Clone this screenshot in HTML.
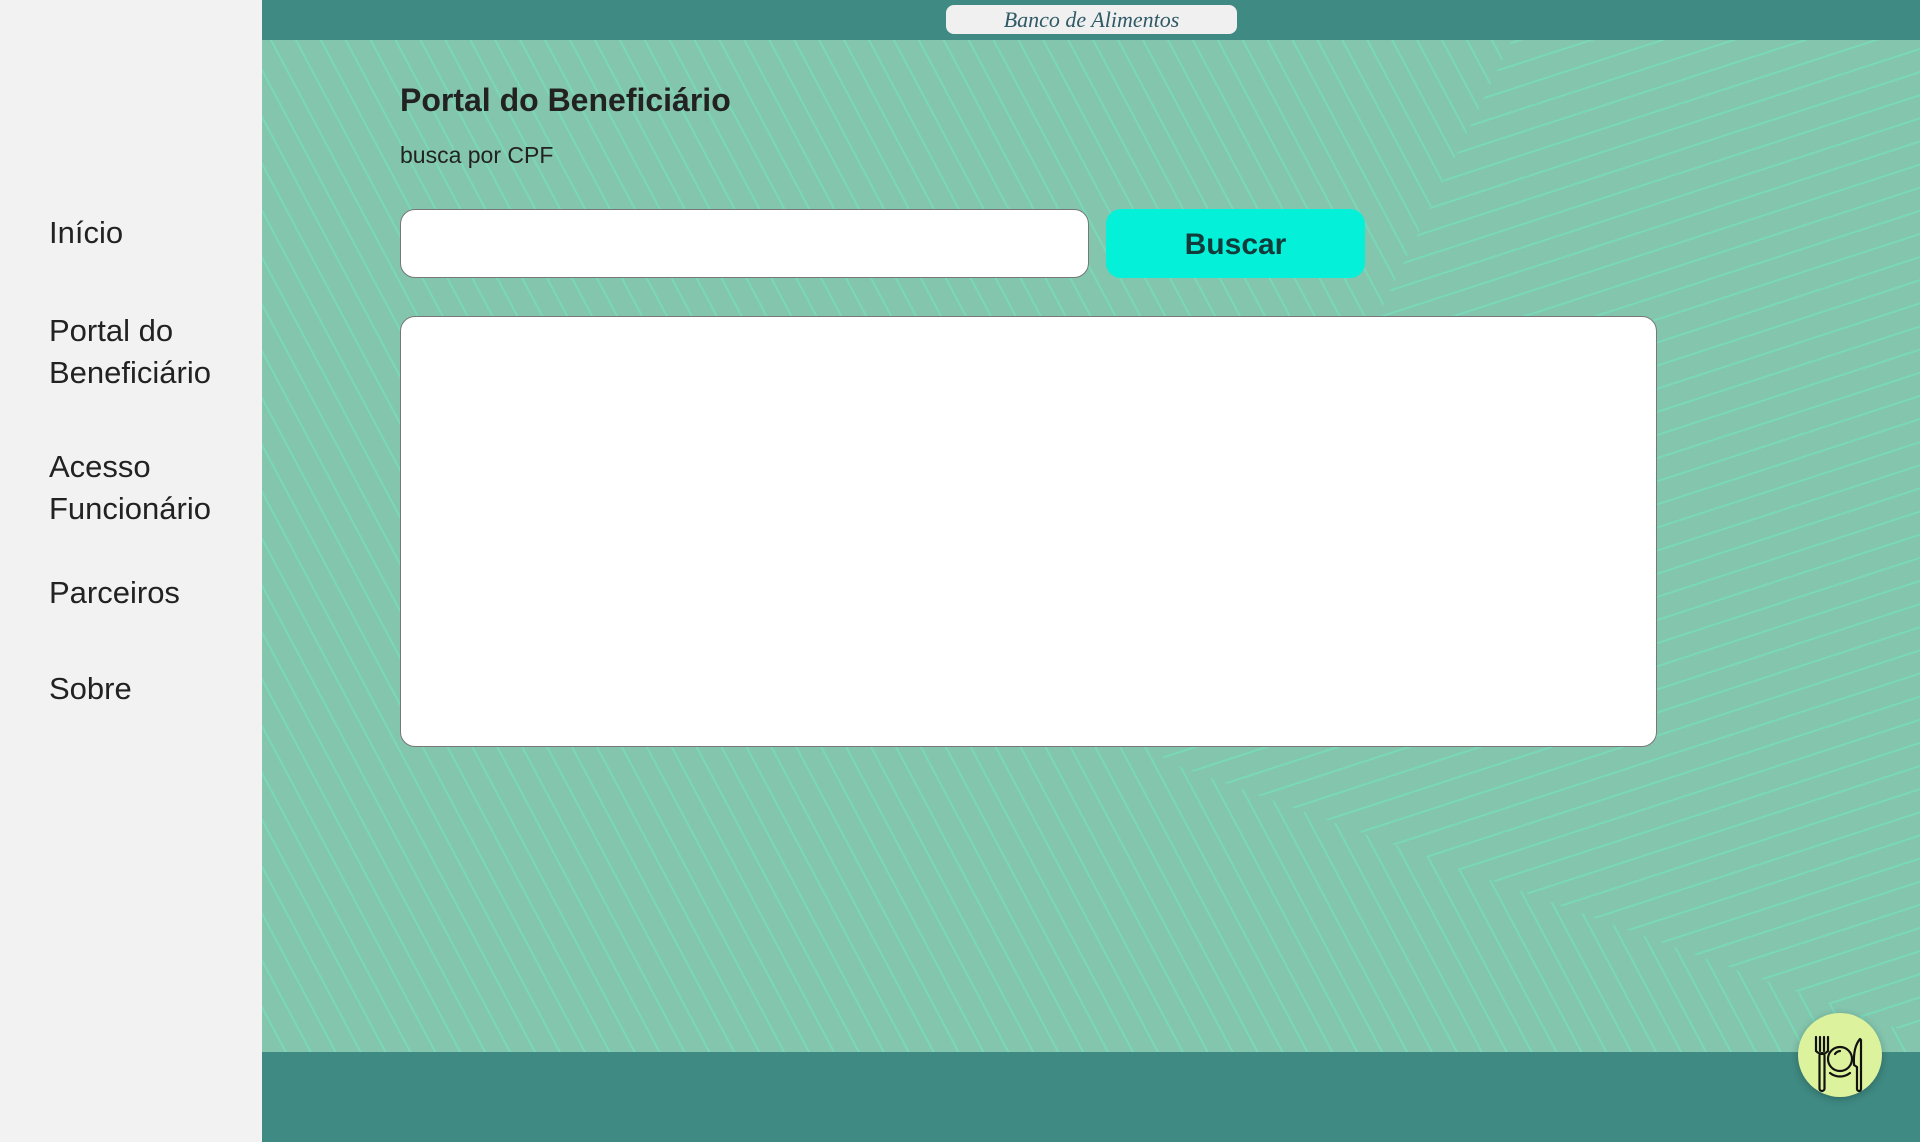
<!DOCTYPE html>
<html><head><meta charset="utf-8"><style>
*{margin:0;padding:0;box-sizing:border-box}
body{width:1920px;height:1142px;overflow:hidden;font-family:"Liberation Sans",sans-serif;background:#84c5ae;position:relative}
.side{position:absolute;left:0;top:0;width:262px;height:1142px;background:#f2f2f2}
.side div{position:absolute;left:49px;font-size:31px;line-height:42px;color:#222}
.main{position:absolute;left:262px;top:40px;width:1658px;height:1012px;background:#84c5ae;overflow:hidden}
.stripes{position:absolute;inset:0;background:repeating-linear-gradient(62deg,transparent 0 20px,rgba(110,235,195,.5) 20px 22px);}
.stripes2{position:absolute;left:900px;top:0;width:800px;height:1012px;background:#84c5ae repeating-linear-gradient(-18deg,transparent 0 20px,rgba(110,235,195,.5) 20px 22px);clip-path:polygon(350px 0,800px 0,800px 1012px,0 720px)}
.hdr{position:absolute;left:262px;top:0;width:1658px;height:40px;background:#3f8a83}
.ftr{position:absolute;left:262px;top:1052px;width:1658px;height:90px;background:#3f8a83}
.title{position:absolute;left:946px;top:5px;width:291px;height:29px;background:#f0f0f0;border-radius:8px;text-align:center;font-family:"URW Chancery L","Z003",cursive;font-style:italic;font-size:22px;line-height:29px;color:#2f5a66}
h1{position:absolute;left:400px;top:82px;font-size:32px;color:#222;font-weight:bold}
.sub{position:absolute;left:400px;top:142px;font-size:23px;color:#222}
.inp{position:absolute;left:400px;top:209px;width:689px;height:69px;background:#fff;border:1px solid #777;border-radius:15px}
.btn{position:absolute;left:1106px;top:209px;width:259px;height:69px;background:#04f0d8;border-radius:15px;text-align:center;line-height:72px;font-size:30px;font-weight:bold;color:#123c3c}
.box{position:absolute;left:400px;top:316px;width:1257px;height:431px;background:#fff;border:1px solid #777;border-radius:15px}
.ico{position:absolute;left:1798px;top:1013px;width:84px;height:84px;border-radius:50%;background:#dcf29c;box-shadow:0 2px 8px rgba(0,0,0,.25)}
</style></head><body>
<div class="main"><div class="stripes"></div><div class="stripes2"></div></div>
<div class="hdr"></div><div class="ftr"></div>
<div class="title">Banco de Alimentos</div>
<div class="side">
<div style="top:212px">Início</div>
<div style="top:310px">Portal do<br>Beneficiário</div>
<div style="top:446px">Acesso<br>Funcionário</div>
<div style="top:572px">Parceiros</div>
<div style="top:668px">Sobre</div>
</div>
<h1>Portal do Beneficiário</h1>
<div class="sub">busca por CPF</div>
<div class="inp"></div>
<div class="btn">Buscar</div>
<div class="box"></div>
<div class="ico"><svg width="84" height="84" viewBox="0 0 84 84" fill="none" stroke="#111" stroke-width="2.2" stroke-linecap="round" stroke-linejoin="round">
<path d="M18 24v14M22 24v14M26 24v14M30 24v14M18 38q6 6 12 0"/>
<rect x="21.5" y="42" width="5" height="38" rx="2.5" transform="translate(0,-2)"/>
<circle cx="42" cy="46" r="12"/><path d="M37 41a7 7 0 0 1 5-3"/>
<path d="M32 60a16 16 0 0 0 20 0"/>
<path d="M62 26q-7 8-6 26l3 2v22a2 2 0 0 0 4 0V27z"/>
</svg></div>
</body></html>
